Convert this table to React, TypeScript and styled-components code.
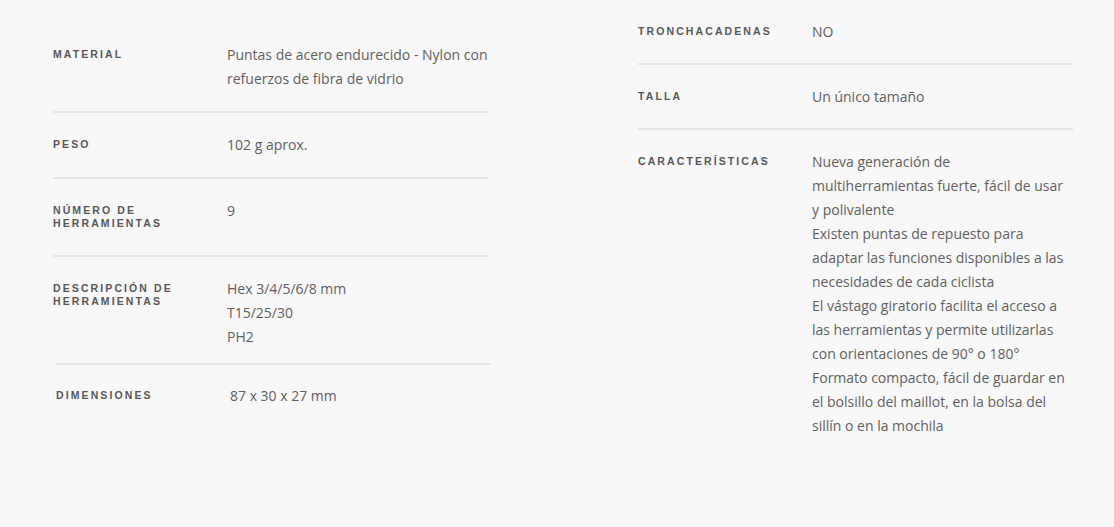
import React from "react";
import styled, { createGlobalStyle } from "styled-components";

const GlobalStyle = createGlobalStyle`
  html, body {
    margin: 0;
    padding: 0;
    background: #f8f8f8;
  }
  body {
    font-family: "Open Sans", "Liberation Sans", sans-serif;
  }
`;

const Page = styled.div`
  display: grid;
  grid-template-columns: 435px 435px;
  column-gap: 150px;
  align-items: start;
  padding-left: 53px;
  min-height: 527px;
  box-sizing: border-box;
`;

const Column = styled.div<{ $offset?: number }>`
  display: flex;
  flex-direction: column;
  padding-top: ${({ $offset }) => $offset || 0}px;
`;

const Table = styled.div<{ $shift?: number; $topLine?: boolean }>`
  display: flex;
  flex-direction: column;
  margin-left: ${({ $shift }) => $shift || 0}px;
  margin-right: ${({ $shift }) => -($shift || 0)}px;
  border-top: ${({ $topLine }) => ($topLine ? "2px solid #e6e6e6" : "none")};
`;

const Row = styled.div<{ $last?: boolean; $pb?: number; $pt?: number }>`
  display: grid;
  grid-template-columns: 174px 1fr;
  align-items: start;
  padding-top: ${({ $pt }) => ($pt === undefined ? 20 : $pt)}px;
  padding-bottom: ${({ $pb }) => ($pb === undefined ? 20 : $pb)}px;
  border-bottom: ${({ $last }) => ($last ? "none" : "2px solid #e6e6e6")};
`;

const Label = styled.div`
  font-family: "Liberation Sans", Arial, sans-serif;
  font-weight: 700;
  font-size: 10.5px;
  line-height: 13px;
  letter-spacing: 2.1px;
  text-transform: uppercase;
  color: #575757;
  padding: 5px 20px 5px 0;
`;

const Value = styled.div`
  font-family: "Open Sans", "Liberation Sans", sans-serif;
  font-size: 14px;
  line-height: 24px;
  color: #606060;
`;

const Line = styled.div``;

type Spec = { label: string; lines: string[] };

const left: Spec[] = [
  { label: "Material", lines: ["Puntas de acero endurecido - Nylon con refuerzos de fibra de vidrio"] },
  { label: "Peso", lines: ["102 g aprox."] },
  { label: "Número de herramientas", lines: ["9"] },
  { label: "Descripción de herramientas", lines: ["Hex 3/4/5/6/8 mm", "T15/25/30", "PH2"] },
];

const right: Spec[] = [
  { label: "Tronchacadenas", lines: ["NO"] },
  { label: "Talla", lines: ["Un único tamaño"] },
  {
    label: "Características",
    lines: [
      "Nueva generación de multiherramientas fuerte, fácil de usar y polivalente",
      "Existen puntas de repuesto para adaptar las funciones disponibles a las necesidades de cada ciclista",
      "El vástago giratorio facilita el acceso a las herramientas y permite utilizarlas con orientaciones de 90° o 180°",
      "Formato compacto, fácil de guardar en el bolsillo del maillot, en la bolsa del sillín o en la mochila",
    ],
  },
];

const SpecRow: React.FC<{ spec: Spec; last?: boolean; pt?: number; pb?: number }> = ({ spec, last, pt, pb }) => (
  <Row $last={last} $pt={pt} $pb={pb}>
    <Label>{spec.label}</Label>
    <Value>
      {spec.lines.map((l) => (
        <Line key={l}>{l}</Line>
      ))}
    </Value>
  </Row>
);

export default function App() {
  return (
    <>
      <GlobalStyle />
      <Page>
        <Column $offset={23}>
          <Table>
            {left.map((s, i) => (
              <SpecRow key={s.label} spec={s} last={i === left.length - 1} pb={i === left.length - 1 ? 14 : 20} />
            ))}
          </Table>
          <Table $shift={3} $topLine>
            <SpecRow spec={{ label: "Dimensiones", lines: ["87 x 30 x 27 mm"] }} last pt={19} />
          </Table>
        </Column>
        <Column>
          <Table>
            {right.map((s, i) => (
              <SpecRow key={s.label} spec={s} last={i === right.length - 1} pb={19} />
            ))}
          </Table>
        </Column>
      </Page>
    </>
  );
}
